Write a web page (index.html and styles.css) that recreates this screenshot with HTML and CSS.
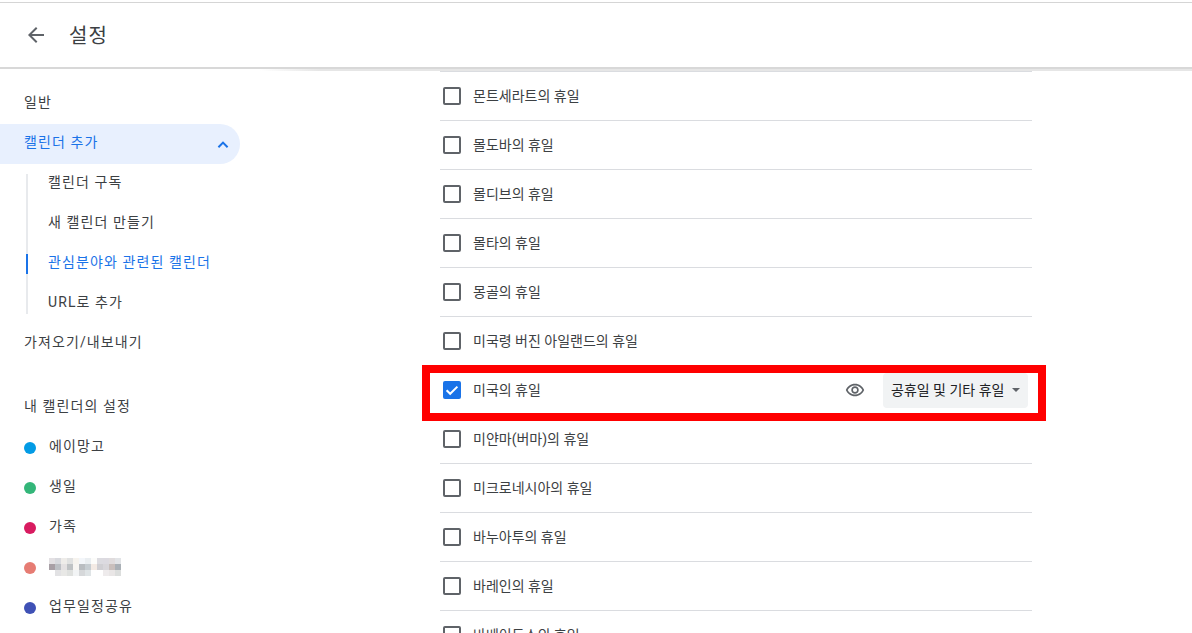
FILE: index.html
```html
<!DOCTYPE html>
<html lang="ko">
<head>
    <meta charset="UTF-8">
    <title>설정</title>
    <link rel="stylesheet" href="styles.css">
</head>
<body>
    <header class="header">
        <svg class="back" width="24" height="24" viewBox="0 0 24 24"><path d="M20 11H7.83l5.59-5.59L12 4l-8 8 8 8 1.41-1.41L7.83 13H20v-2z"/></svg>
        <h1>설정</h1>
    </header>
    <div class="page">
        <nav class="sidebar">
            <a class="nav-item">일반</a>
            <a class="nav-item nav-open">
                <span>캘린더 추가</span>
                <svg width="12" height="8" viewBox="0 0 12 8"><path d="M1.4 7.2 6 2.6l4.6 4.6" fill="none" stroke="#1a73e8" stroke-width="2"/></svg>
            </a>
            <div class="sub-nav">
                <a class="nav-item sub-item">캘린더 구독</a>
                <a class="nav-item sub-item">새 캘린더 만들기</a>
                <a class="nav-item sub-item active">관심분야와 관련된 캘린더</a>
                <a class="nav-item sub-item">URL로 추가</a>
            </div>
            <a class="nav-item">가져오기/내보내기</a>
            <div class="nav-item nav-title">내 캘린더의 설정</div>
            <a class="nav-item cal-item"><i class="dot dot-blue"></i>에이망고</a>
            <a class="nav-item cal-item"><i class="dot dot-green"></i>생일</a>
            <a class="nav-item cal-item"><i class="dot dot-pink"></i>가족</a>
            <a class="nav-item cal-item"><i class="dot dot-salmon"></i><span class="mosaic"></span></a>
            <a class="nav-item cal-item"><i class="dot dot-indigo"></i>업무일정공유</a>
        </nav>
        <main class="content">
            <ul class="holidays">
                <li><span class="check"></span>몬트세라트의 휴일</li>
                <li><span class="check"></span>몰도바의 휴일</li>
                <li><span class="check"></span>몰디브의 휴일</li>
                <li><span class="check"></span>몰타의 휴일</li>
                <li><span class="check"></span>몽골의 휴일</li>
                <li><span class="check"></span>미국령 버진 아일랜드의 휴일</li>
                <li class="selected">
                    <span class="check checked">
                        <svg width="18" height="18" viewBox="0 0 18 18"><path d="M3.6 9.2 7.2 12.8 14.4 5.6" fill="none" stroke="#fff" stroke-width="2"/></svg>
                    </span>
                    <span class="name">미국의 휴일</span>
                    <svg class="eye" width="24" height="24" viewBox="0 0 24 24"><path d="M12 6.5c3.79 0 7.17 2.13 8.82 5.5-1.65 3.37-5.02 5.5-8.82 5.5S4.83 15.37 3.18 12C4.83 8.63 8.21 6.5 12 6.5m0-2C7 4.5 2.73 7.61 1 12c1.73 4.39 6 7.5 11 7.5s9.27-3.11 11-7.5c-1.73-4.39-6-7.5-11-7.5zm0 5a2.5 2.5 0 0 1 0 5 2.5 2.5 0 0 1 0-5m0-2c-2.48 0-4.5 2.02-4.5 4.5s2.02 4.5 4.5 4.5 4.5-2.02 4.5-4.5-2.02-4.5-4.5-4.5z"/></svg>
                    <span class="select">공휴일 및 기타 휴일<i class="caret"></i></span>
                    <span class="highlight"></span>
                </li>
                <li><span class="check"></span>미얀마(버마)의 휴일</li>
                <li><span class="check"></span>미크로네시아의 휴일</li>
                <li><span class="check"></span>바누아투의 휴일</li>
                <li><span class="check"></span>바레인의 휴일</li>
                <li><span class="check"></span>바베이도스의 휴일</li>
            </ul>
        </main>
    </div>
</body>
</html>
```

FILE: styles.css
```css
* {
    box-sizing: border-box;
}

html, body {
    height: 100%;
}

body {
    margin: 0;
    overflow: hidden;
    background-color: white;
    color: #3c4043;
    font-family: Roboto, 'Noto Sans CJK KR', sans-serif;
    font-size: 14px;
}

.header {
    display: flex;
    align-items: center;
    height: 67px;
    padding-left: 24px;
    margin-top: 2px;
    border-top: 1px solid #d5d5d5;
    border-bottom: 2px solid #d8d8d8;
}

.back {
    fill: #5f6368;
}

.header h1 {
    margin: 0 0 2px 21px;
    font-size: 20px;
    font-weight: 400;
    letter-spacing: 1px;
}

.page {
    display: flex;
    height: 564px;
    background: linear-gradient(90deg, transparent 260px, #e6e6e6 320px) no-repeat 0 0 / 100% 2px;
}

.sidebar {
    flex: none;
    width: 240px;
    padding-top: 15px;
    letter-spacing: 1.1px;
}

.nav-item {
    display: flex;
    align-items: center;
    height: 40px;
    padding: 0 0 6px 24px;
}

.nav-open {
    justify-content: space-between;
    padding-right: 11px;
    border-radius: 0 20px 20px 0;
    background-color: #e8f0fe;
    color: #1a73e8;
}

.nav-open svg {
    margin-top: 6px;
}

.sub-nav {
    position: relative;
    margin-left: 26px;
}

.sub-nav::before {
    content: "";
    position: absolute;
    left: 0;
    top: 10px;
    bottom: 10px;
    width: 2px;
    background-color: #e8eaed;
}

.sub-item {
    position: relative;
    padding-left: 22px;
}

.sub-item.active {
    color: #1a73e8;
}

.sub-item.active::before {
    content: "";
    position: absolute;
    left: 0;
    top: 10px;
    width: 2px;
    height: 20px;
    background-color: #1a73e8;
}

.nav-title {
    margin-top: 24px;
}

.dot {
    width: 12px;
    height: 12px;
    margin: 6px 13px 0 0;
    border-radius: 50%;
}

.dot-blue { background-color: #039be5; }
.dot-green { background-color: #33b679; }
.dot-pink { background-color: #d81b60; }
.dot-salmon { background-color: #e67c73; }
.dot-indigo { background-color: #3f51b5; }

/* blurred calendar name */
.mosaic {
    width: 72px;
    height: 18px;
    margin-top: 4px;
    background-image:
        linear-gradient(90deg, #e3e0e3 6px, #d8d9de 6px 12px, #eeece9 12px 18px, #e0e1e1 18px 24px, #f6f3ee 24px 30px, #f3f6fa 30px 36px, #eaeef1 36px 42px, #fcfcfa 42px 48px, #dcdbe0 48px 54px, #dcdae0 54px 60px, #e0dcdd 60px 66px, #e2e4e7 66px 72px),
        linear-gradient(90deg, #a89fa5 6px, #bcbfc4 6px 12px, #e4e1e2 12px 18px, #bfc2c4 18px 24px, #f7f5f2 24px 30px, #b9bdc1 30px 36px, #c6cdd2 36px 42px, #f3eae4 42px 48px, #d0cfd3 48px 54px, #d8d6da 54px 60px, #c9bfbc 60px 66px, #aab0b6 66px 72px),
        linear-gradient(90deg, #fff 6px, #e2e2e4 6px 12px, #e8e8e6 12px 18px, #dfe1df 18px 24px, #f2f4f5 24px 30px, #d6d8da 30px 36px, #dfe4e6 36px 42px, #fff 42px 54px, #eeebec 54px 60px, #e9e6e6 60px 66px, #dcdedd 66px 72px);
    background-size: 100% 6px;
    background-position: 0 0, 0 6px, 0 12px;
    background-repeat: no-repeat;
}

.content {
    flex: none;
    width: 592px;
    margin-left: 200px;
    padding-top: 2px;
}

.holidays {
    margin: 0;
    padding: 0;
    list-style: none;
    border-top: 1px solid #dadce0;
}

.holidays li {
    display: flex;
    align-items: center;
    height: 49px;
    padding-bottom: 2px;
    border-bottom: 1px solid #dadce0;
    position: relative;
}

.check {
    flex: none;
    width: 18px;
    height: 18px;
    margin: 2px 12px 0 3px;
    border: 2px solid #5f6368;
    border-radius: 2px;
}

.check.checked {
    border: none;
    background-color: #1a73e8;
}

.check svg {
    display: block;
}

.name {
    flex: 1;
}

.eye {
    width: 20px;
    height: 20px;
    fill: #5f6368;
    margin: 2px 18px 0 0;
}

.select {
    display: flex;
    align-items: center;
    justify-content: space-between;
    width: 145px;
    height: 35px;
    margin: 2px 4px 0 0;
    padding: 0 8px 2px;
    border-radius: 4px;
    background-color: #f1f3f4;
    color: #202124;
}

.caret {
    width: 0;
    height: 0;
    margin-top: 2px;
    border-left: 4px solid transparent;
    border-right: 4px solid transparent;
    border-top: 4px solid #5f6368;
}

.highlight {
    position: absolute;
    left: -18px;
    top: -1px;
    width: 624px;
    height: 56px;
    border: 8px solid red;
}
```
